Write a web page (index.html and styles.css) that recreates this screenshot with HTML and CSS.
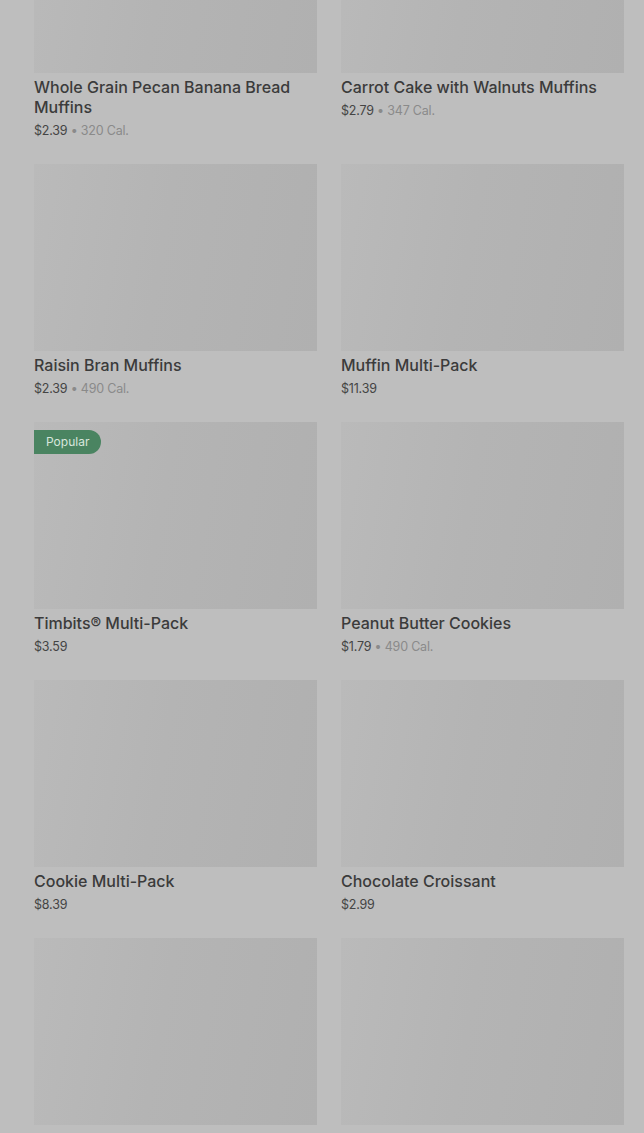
FILE: index.html
```html
<!DOCTYPE html>
<html lang="en">
<head>
  <meta charset="UTF-8">
  <meta name="viewport" content="width=device-width, initial-scale=1.0">
  <title>Menu</title>
  <link rel="stylesheet" href="styles.css">
</head>
<body>
  <div class="menu-grid">
    <div class="item">
      <div class="thumb"></div>
      <div class="name">Whole Grain Pecan Banana Bread Muffins</div>
      <div class="meta">$2.39 <span class="cal">• 320 Cal.</span></div>
    </div>
    <div class="item">
      <div class="thumb"></div>
      <div class="name">Carrot Cake with Walnuts Muffins</div>
      <div class="meta">$2.79 <span class="cal">• 347 Cal.</span></div>
    </div>

    <div class="item">
      <div class="thumb"></div>
      <div class="name">Raisin Bran Muffins</div>
      <div class="meta">$2.39 <span class="cal">• 490 Cal.</span></div>
    </div>
    <div class="item">
      <div class="thumb"></div>
      <div class="name">Muffin Multi-Pack</div>
      <div class="meta">$11.39</div>
    </div>

    <div class="item">
      <div class="thumb">
        <span class="badge">Popular</span>
      </div>
      <div class="name">Timbits® Multi-Pack</div>
      <div class="meta">$3.59</div>
    </div>
    <div class="item">
      <div class="thumb"></div>
      <div class="name">Peanut Butter Cookies</div>
      <div class="meta">$1.79 <span class="cal">• 490 Cal.</span></div>
    </div>

    <div class="item">
      <div class="thumb"></div>
      <div class="name">Cookie Multi-Pack</div>
      <div class="meta">$8.39</div>
    </div>
    <div class="item">
      <div class="thumb"></div>
      <div class="name">Chocolate Croissant</div>
      <div class="meta">$2.99</div>
    </div>

    <div class="item">
      <div class="thumb"></div>
      <div class="name">Maple Dip Donut</div>
      <div class="meta">$1.89 <span class="cal">• 210 Cal.</span></div>
    </div>
    <div class="item">
      <div class="thumb"></div>
      <div class="name">Apple Fritter</div>
      <div class="meta">$2.19 <span class="cal">• 300 Cal.</span></div>
    </div>
  </div>
</body>
</html>
```

FILE: styles.css
```css
body {
  margin: 0;
  background: #bebebe;
  font-family: Inter, "Noto Sans", Arial, sans-serif;
  color: #3c3c3c;
  overflow: hidden;
}
.menu-grid {
  display: grid;
  grid-template-columns: 283px 283px;
  column-gap: 24px;
  row-gap: 23px;
  padding: 0 20px 0 34px;
  margin-top: -114px;
}
.thumb {
  position: relative;
  height: 187px;
  background: linear-gradient(100deg, #bababa 0%, #b4b4b4 45%, #b0b0b0 100%);
}
.name {
  margin-top: 4px;
  font-size: 16px;
  font-weight: 500;
  line-height: 20px;
  color: #3b3b3b;
}
.meta {
  margin-top: 4px;
  font-size: 12.5px;
  line-height: 20px;
  letter-spacing: -0.2px;
  color: #444;
}
.cal {
  color: #8a8a8a;
}
.badge {
  position: absolute;
  top: 8px;
  left: 0;
  height: 24px;
  line-height: 24px;
  padding: 0 12px;
  font-size: 12px;
  color: #d8e6dd;
  background: #4a8461;
  border-radius: 0 12px 12px 0;
}
```
